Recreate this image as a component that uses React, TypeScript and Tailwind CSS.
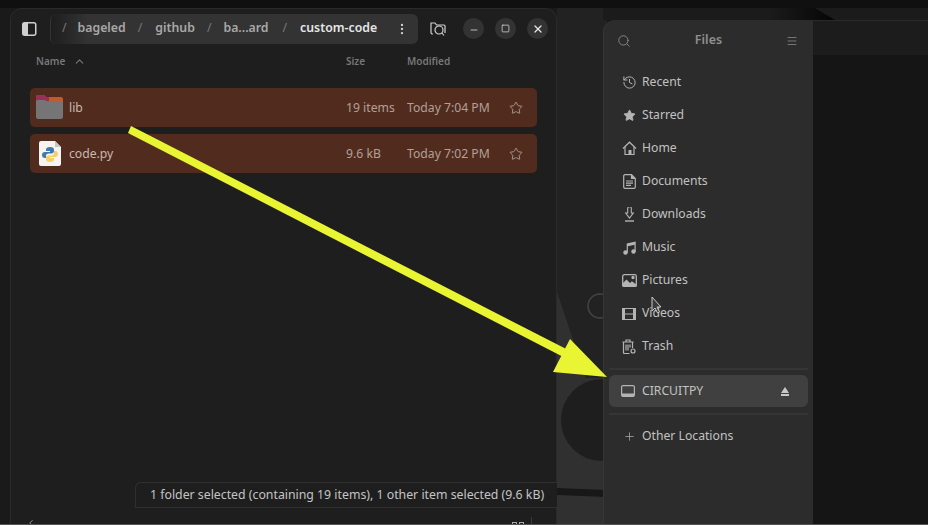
import { Star, Search, Menu, Plus, MoreVertical, Minus, Square, X, ChevronUp, ChevronLeft, History } from "lucide-react"

const font = "font-['Noto_Sans','Open_Sans',sans-serif]"

function PythonFile() {
    return (
        <svg width="22" height="25" viewBox="0 0 22 25" className="shrink-0">
            <path d="M2 0h14l6 6v17a2 2 0 0 1-2 2H2a2 2 0 0 1-2-2V2a2 2 0 0 1 2-2z" fill="#f5f4f2" />
            <path d="M16 0v6h6z" fill="#c9c7c3" />
            <path d="M11 6c-3 0-4 1-4 3v1h4v1H6c-2 0-3 1-3 3s1 3 3 3h1v-2c0-1.500 1-2.500 2.500-2.500h3c1.500 0 2.500-1 2.500-2.500V9c0-2-1-3-4-3z" fill="#3f79ad" />
            <path d="M11 21c3 0 4-1 4-3v-1h-4v-1h5c2 0 3-1 3-3s-1-3-3-3h-1v2c0 1.500-1 2.500-2.500 2.500h-3C8 14.500 7 15.500 7 17v1c0 2 1 3 4 3z" fill="#f3d163" />
        </svg>
    )
}

function FolderIcon() {
    return (
        <svg width="27" height="25" viewBox="0 0 27 25" className="shrink-0">
            <path d="M0 2a2 2 0 0 1 2-2h6l2 2h15a2 2 0 0 1 2 2v5H0z" fill="#c25a2e" />
            <path d="M0 2a2 2 0 0 1 2-2h6l2 2h3v4H0z" fill="#9b2f5a" />
            <path d="M0 7a2 2 0 0 1 2-2h7l2 2h14a2 2 0 0 1 2 2v13a2 2 0 0 1-2 2H2a2 2 0 0 1-2-2z" fill="#757575" />
        </svg>
    )
}

function FileRow({ name, size, time, folder }: { name: string; size: string; time: string; folder?: boolean }) {
    return (
        <div className="flex h-[39px] items-center rounded-[5px] bg-[#522b1f] pl-[6px] text-[12.2px] text-[#b0a097]">
            <div className="flex w-[27px] justify-center">{folder ? <FolderIcon /> : <PythonFile />}</div>
            <span className="ml-[6px] mt-px w-[277px] text-[#c8b8b1]">{name}</span>
            <span className="mt-px w-[61px]">{size}</span>
            <span className="mt-px w-[102px]">{time}</span>
            <Star size={14} strokeWidth={1.5} className="mt-px text-[#b0a097]" />
        </div>
    )
}

function FilesWindow() {
    return (
        <div className="absolute left-[10px] top-[8px] flex h-[517px] w-[547px] flex-col rounded-t-[12px] border border-b-0 border-[#2a2a2a] bg-[#1e1e1e]">
            <div className="flex h-[39px] items-center">
                <svg width="16" height="14" viewBox="0 0 16 14" className="ml-[11px]">
                    <rect x="0.750" y="0.750" width="13" height="12.500" rx="2" fill="none" stroke="#cfcfcf" strokeWidth="1.500" />
                    <rect x="1" y="1" width="5" height="12" fill="#cfcfcf" />
                </svg>
                <div className="ml-[12px] flex h-[30px] w-[368px] items-center whitespace-nowrap rounded-[6px] border-l border-[#333] bg-gradient-to-r from-[#1e1e1e] to-[#333333] to-[10%] pl-[11px] text-[12.3px] font-semibold text-[#a8a8a8]">
                    <span className="font-normal text-[#777]">/</span>
                    <span className="ml-[11px]">bageled</span>
                    <span className="ml-[12px] font-normal text-[#777]">/</span>
                    <span className="ml-[13px]">github</span>
                    <span className="ml-[12px] font-normal text-[#777]">/</span>
                    <span className="ml-[12px]">ba...ard</span>
                    <span className="ml-[14px] font-normal text-[#777]">/</span>
                    <span className="ml-[13px] text-[#e6e6e6]">custom-code</span>
                    <MoreVertical size={14} className="ml-auto mr-[9px] text-[#cfcfcf]" />
                </div>
                <svg width="16" height="14" viewBox="0 0 16 14" fill="none" stroke="#cfcfcf" strokeWidth="1.200" className="ml-[12px]">
                    <path d="M3 12H2a1.500 1.500 0 0 1-1-1.500V1h4l1.500 2H14a1 1 0 0 1 1 1v7" />
                    <circle cx="9" cy="8" r="4" />
                    <path d="M12 11l2 2.500" />
                </svg>
                <div className="ml-[17px] flex gap-[11px]">
                    <div className="flex h-[21px] w-[21px] items-center justify-center rounded-full bg-[#333] text-[#d8d8d8]"><Minus size={10} strokeWidth={2} className="mt-[3px]" /></div>
                    <div className="flex h-[21px] w-[21px] items-center justify-center rounded-full bg-[#333] text-[#d8d8d8]"><Square size={9} strokeWidth={2} /></div>
                    <div className="flex h-[21px] w-[21px] items-center justify-center rounded-full bg-[#333] text-[#e8e8e8]"><X size={12} strokeWidth={2.500} /></div>
                </div>
            </div>
            <div className="mt-[4px] flex h-[18px] items-center pl-[25px] text-[10px] font-semibold text-[#777]">
                <span className="flex w-[310px] items-center">
                    Name
                    <ChevronUp size={13} className="ml-[8px]" />
                </span>
                <span className="w-[61px]">Size</span>
                <span>Modified</span>
            </div>
            <div className="mt-[18px] flex flex-col gap-[7px] pl-[19px] pr-[19px]">
                <FileRow folder name="lib" size="19 items" time="Today 7:04 PM" />
                <FileRow name="code.py" size="9.6 kB" time="Today 7:02 PM" />
            </div>
            <div className="absolute bottom-[17px] left-[124px] flex h-[26px] w-[422px] items-center rounded-tl-[6px] border-y border-l border-[#2f2f2f] bg-[#1e1e1e] pl-[14px] text-[12.3px] text-[#c4c4c4]">
                1 folder selected (containing 19 items), 1 other item selected (9.6 kB)
            </div>
            <ChevronLeft size={10} className="absolute bottom-[-3px] left-[15px] text-[#aaa]" />
            <div className="absolute bottom-0 left-[501px] flex gap-[2px]">
                <div className="h-[3px] w-[5px] border border-b-0 border-[#aaa]" />
                <div className="h-[3px] w-[5px] border border-b-0 border-[#aaa]" />
            </div>
            <div className="absolute bottom-0 left-[520px] h-[8px] w-px bg-[#3a3a3a]" />
        </div>
    )
}

function NavItem({ icon, label }: { icon: React.ReactNode; label: string }) {
    return (
        <div className="flex h-[33px] items-center pl-[17px] text-[12.2px] text-[#c2c2c2]">
            <div className="flex w-[16px] justify-center text-[#b4b4b4]">{icon}</div>
            <span className="ml-[5px]">{label}</span>
        </div>
    )
}

function Sidebar() {
    return (
        <div className="absolute left-[603px] top-[20px] flex h-[505px] w-[210px] flex-col rounded-tl-[12px] border-l border-[#363636] bg-[#2c2c2c]">
            <div className="flex h-[40px] items-center justify-between pl-[13px] pr-[15px] pt-[1px] text-[#8e8e8e]">
                <Search size={14} strokeWidth={1.500} />
                <span className="text-[12.5px] font-semibold">Files</span>
                <Menu size={12} strokeWidth={1.500} />
            </div>
            <div className="mt-[6px] flex flex-col">
                <NavItem icon={<History size={15} strokeWidth={1.600} />} label="Recent" />
                <NavItem icon={<Star size={13} fill="currentColor" strokeWidth={1.500} />} label="Starred" />
                <NavItem icon={
                    <svg width="15" height="15" viewBox="0 0 15 15" fill="none" stroke="currentColor" strokeWidth="1.200">
                        <path d="M1 7.500L7.500 1.200 14 7.500" />
                        <path d="M3 6v7.500h9V6" />
                        <rect x="6.500" y="9" width="3" height="4.500" fill="currentColor" stroke="none" />
                    </svg>
                } label="Home" />
                <NavItem icon={
                    <svg width="13" height="15" viewBox="0 0 13 15" fill="none" stroke="currentColor" strokeWidth="1.200">
                        <path d="M2 .700h6.500l3.800 3.800V13a1.300 1.300 0 0 1-1.300 1.300H2A1.300 1.300 0 0 1 .700 13V2A1.300 1.300 0 0 1 2 .700z" />
                        <path d="M8.500 1v3.500H12" fill="currentColor" />
                        <path d="M3 7h7M3 9.200h7M3 11.400h5" />
                    </svg>
                } label="Documents" />
                <NavItem icon={
                    <svg width="11" height="15" viewBox="0 0 11 15" fill="none" stroke="currentColor" strokeWidth="1.100">
                        <path d="M3.700 1.500a1.800 1.800 0 0 1 3.600 0V6h2L5.500 11 1.700 6h2z" />
                        <path d="M1 14h9" strokeWidth="1.400" />
                    </svg>
                } label="Downloads" />
                <NavItem icon={
                    <svg width="13" height="14" viewBox="0 0 13 14" fill="currentColor">
                        <circle cx="2.500" cy="11.500" r="2.200" />
                        <circle cx="10.500" cy="10.500" r="2.200" />
                        <path d="M3.700 11.500V2.500L12.700.500v10h-1.200V3.800l-6.600 1.400v6.300z" />
                    </svg>
                } label="Music" />
                <NavItem icon={
                    <svg width="15" height="13" viewBox="0 0 15 13" fill="none" stroke="currentColor" strokeWidth="1.300">
                        <rect x="0.700" y="0.700" width="13.600" height="11.600" rx="1.500" />
                        <path d="M1 10l3.500-3.500L8 10l2-2 4 3v1H1z" fill="currentColor" />
                        <circle cx="11" cy="3.500" r="1" fill="currentColor" />
                    </svg>
                } label="Pictures" />
                <NavItem icon={
                    <svg width="14" height="12" viewBox="0 0 14 12" fill="currentColor">
                        <path d="M0 0h3v12H0zM11 0h3v12h-3z" />
                        <path d="M3 .500h8M3 11.500h8M3 6h8" stroke="currentColor" strokeWidth="1" />
                    </svg>
                } label="Videos" />
                <NavItem icon={
                    <svg width="14" height="15" viewBox="0 0 14 15" fill="none" stroke="currentColor" strokeWidth="1.200">
                        <path d="M.500 3h11M4 3V1h4v2" />
                        <path d="M1.500 3v10.500a1 1 0 0 0 1 1h5M10.500 3v6" />
                        <path d="M4 5.500v6M6 5.500v6M8 5.500v3" />
                        <circle cx="11" cy="12" r="2" />
                    </svg>
                } label="Trash" />
            </div>
            <div className="mx-[5px] mt-[5px] h-[2px] bg-[#353535]" />
            <div className="mx-[5px] mt-[5px] flex h-[32px] items-center rounded-[6px] bg-[#404040] pl-[12px] pr-[19px] text-[12.2px] text-[#c2c2c2]">
                <svg width="14" height="12" viewBox="0 0 14 12" fill="none" stroke="#b4b4b4" strokeWidth="1.200">
                    <rect x="0.600" y="0.600" width="12.800" height="10.800" rx="1.500" />
                    <rect x="1" y="8.500" width="12" height="2.500" fill="#b4b4b4" stroke="none" />
                </svg>
                <span className="ml-[7px]">CIRCUITPY</span>
                <svg width="8" height="9" viewBox="0 0 8 9" className="ml-auto" fill="#c8c8c8">
                    <path d="M4 0l4 6H0z" />
                    <rect x="0" y="7" width="8" height="2" />
                </svg>
            </div>
            <div className="mx-[5px] mt-[6px] h-[2px] bg-[#353535]" />
            <div className="mt-[5px]">
                <NavItem icon={<Plus size={13} strokeWidth={1.300} />} label="Other Locations" />
            </div>
        </div>
    )
}

function Wallpaper() {
    return (
        <svg width="928" height="525" viewBox="0 0 928 525" className="absolute left-0 top-0">
            <defs>
                <linearGradient id="topShade" x1="0" x2="1" y1="0" y2="0">
                    <stop offset="0" stopColor="#1b1b1b" />
                    <stop offset="1" stopColor="#050505" />
                </linearGradient>
            </defs>
            <rect x="0" y="0" width="928" height="8" fill="#101010" />
            <rect x="557" y="8" width="50" height="517" fill="#222222" />
            <path d="M557 292L586 378H607V525H557z" fill="#303030" />
            <circle cx="602" cy="420" r="41" fill="#1e1e1e" />
            <circle cx="600" cy="306" r="12" fill="none" stroke="#444" strokeWidth="1.500" />
            <path d="M557 488L607 490V497L557 495z" fill="#181818" />
            <rect x="603" y="8" width="325" height="12" fill="#1b1b1b" />
            <path d="M770 8H815L835 20H770z" fill="url(#topShade)" />
            <rect x="813" y="20" width="115" height="35" fill="#1c1c1c" />
            <rect x="813" y="20" width="115" height="1" fill="#2a2a2a" />
            <rect x="813" y="55" width="115" height="470" fill="#151515" />
        </svg>
    )
}

function Arrow() {
    return (
        <svg width="928" height="525" viewBox="0 0 928 525" className="absolute left-0 top-0">
            <path d="M131 126L128 133L573 362L576 354z" fill="#e9f533" />
            <path d="M607 377L553 372L570 339z" fill="#e9f533" />
        </svg>
    )
}

export default function App() {
    return (
        <div className={`relative h-[525px] w-[928px] overflow-hidden bg-[#1a1a1a] ${font}`}>
            <Wallpaper />
            <FilesWindow />
            <Sidebar />
            <div className="absolute bottom-0 left-0 h-px w-full bg-[#555]" />
            <Arrow />
            <svg width="12" height="20" viewBox="0 0 12 20" className="absolute left-[651px] top-[296px]">
                <path d="M1 1v14l3-3 2.500 5 2-1-2.500-5h4z" fill="#3a3a3a" stroke="#c8c8c8" strokeWidth="1" />
            </svg>
        </div>
    )
}
